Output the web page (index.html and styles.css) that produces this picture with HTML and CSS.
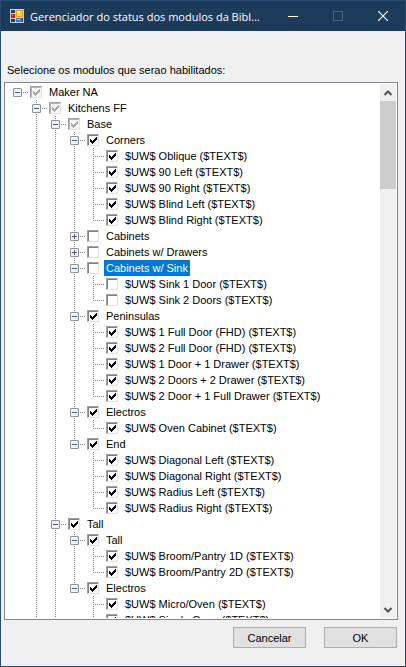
FILE: index.html
```html
<!DOCTYPE html>
<html lang="pt-BR">
<head>
  <meta charset="UTF-8">
  <title>Gerenciador do status dos modulos</title>
  <link rel="stylesheet" href="styles.css">
</head>
<body>
  <div class="window">
    <!-- Title bar -->
    <header class="titlebar">
      <svg class="app-icon" width="14" height="14" viewBox="0 0 14 14" shape-rendering="crispEdges">
        <rect width="14" height="14" fill="#c9cdd2"/>
        <rect x="1" y="1" width="4" height="3" fill="#24405c"/>
        <rect x="1" y="10" width="4" height="3" fill="#24405c"/>
        <rect x="12" y="9" width="1" height="4" fill="#24405c"/>
        <rect x="1" y="5" width="4" height="4" fill="#b3261e"/>
        <rect x="2" y="6" width="1" height="1" fill="#f0a090"/>
        <rect x="6" y="1" width="7" height="7" fill="#e0a010"/>
        <rect x="7" y="2" width="5" height="5" fill="#fbd04a"/>
        <rect x="7" y="2" width="3" height="2" fill="#fff0b0"/>
        <rect x="6" y="9" width="6" height="4" fill="#3a78d8"/>
        <rect x="7" y="10" width="3" height="1" fill="#a8ccff"/>
      </svg>
      <h1 class="title">Gerenciador do status dos modulos da Bibl...</h1>
      <div class="window-buttons">
        <button type="button" aria-label="Minimizar">
          <svg width="10" height="10" viewBox="0 0 10 10" shape-rendering="crispEdges"><path d="M0 5.5H10" stroke="#fff"/></svg>
        </button>
        <button type="button" aria-label="Maximizar" disabled>
          <svg width="10" height="10" viewBox="0 0 10 10" shape-rendering="crispEdges"><path d="M.5 .5H9.500V9.500H.5Z" fill="none" stroke="#4b647d"/></svg>
        </button>
        <button type="button" aria-label="Fechar">
          <svg width="10" height="10" viewBox="0 0 10 10"><path d="M0 0L10 10M10 0L0 10" stroke="#fff" stroke-width="1.2"/></svg>
        </button>
      </div>
    </header>

    <main class="content">
      <p class="caption">Selecione os modulos que serao habilitados:</p>

      <div class="tree-box">
        <ul class="tree">
          <li class="root">
            <div class="row"><button class="toggle minus" aria-label="Maker NA"></button><label><input type="checkbox" class="partial" checked><span>Maker NA</span></label></div>
            <ul>
              <li class="more">
                <div class="row"><button class="toggle minus" aria-label="Kitchens FF"></button><label><input type="checkbox" class="partial" checked><span>Kitchens FF</span></label></div>
                <ul>
                  <li>
                    <div class="row"><button class="toggle minus" aria-label="Base"></button><label><input type="checkbox" class="partial" checked><span>Base</span></label></div>
                    <ul>
                      <li>
                        <div class="row"><button class="toggle minus" aria-label="Corners"></button><label><input type="checkbox" checked><span>Corners</span></label></div>
                        <ul>
                          <li><div class="row leaf"><label><input type="checkbox" checked><span>$UW$ Oblique ($TEXT$)</span></label></div></li>
                          <li><div class="row leaf"><label><input type="checkbox" checked><span>$UW$ 90 Left ($TEXT$)</span></label></div></li>
                          <li><div class="row leaf"><label><input type="checkbox" checked><span>$UW$ 90 Right ($TEXT$)</span></label></div></li>
                          <li><div class="row leaf"><label><input type="checkbox" checked><span>$UW$ Blind Left ($TEXT$)</span></label></div></li>
                          <li><div class="row leaf"><label><input type="checkbox" checked><span>$UW$ Blind Right ($TEXT$)</span></label></div></li>
                        </ul>
                      </li>
                      <li>
                        <div class="row"><button class="toggle plus" aria-label="Cabinets"></button><label><input type="checkbox"><span>Cabinets</span></label></div>
                      </li>
                      <li>
                        <div class="row"><button class="toggle plus" aria-label="Cabinets w/ Drawers"></button><label><input type="checkbox"><span>Cabinets w/ Drawers</span></label></div>
                      </li>
                      <li>
                        <div class="row"><button class="toggle minus" aria-label="Cabinets w/ Sink"></button><label><input type="checkbox"><span class="selected">Cabinets w/ Sink</span></label></div>
                        <ul>
                          <li><div class="row leaf"><label><input type="checkbox"><span>$UW$ Sink 1 Door ($TEXT$)</span></label></div></li>
                          <li><div class="row leaf"><label><input type="checkbox"><span>$UW$ Sink 2 Doors ($TEXT$)</span></label></div></li>
                        </ul>
                      </li>
                      <li>
                        <div class="row"><button class="toggle minus" aria-label="Peninsulas"></button><label><input type="checkbox" checked><span>Peninsulas</span></label></div>
                        <ul>
                          <li><div class="row leaf"><label><input type="checkbox" checked><span>$UW$ 1 Full Door (FHD) ($TEXT$)</span></label></div></li>
                          <li><div class="row leaf"><label><input type="checkbox" checked><span>$UW$ 2 Full Door (FHD) ($TEXT$)</span></label></div></li>
                          <li><div class="row leaf"><label><input type="checkbox" checked><span>$UW$ 1 Door + 1 Drawer ($TEXT$)</span></label></div></li>
                          <li><div class="row leaf"><label><input type="checkbox" checked><span>$UW$ 2 Doors + 2 Drawer ($TEXT$)</span></label></div></li>
                          <li><div class="row leaf"><label><input type="checkbox" checked><span>$UW$ 2 Door + 1 Full Drawer ($TEXT$)</span></label></div></li>
                        </ul>
                      </li>
                      <li>
                        <div class="row"><button class="toggle minus" aria-label="Electros"></button><label><input type="checkbox" checked><span>Electros</span></label></div>
                        <ul>
                          <li><div class="row leaf"><label><input type="checkbox" checked><span>$UW$ Oven Cabinet ($TEXT$)</span></label></div></li>
                        </ul>
                      </li>
                      <li>
                        <div class="row"><button class="toggle minus" aria-label="End"></button><label><input type="checkbox" checked><span>End</span></label></div>
                        <ul>
                          <li><div class="row leaf"><label><input type="checkbox" checked><span>$UW$ Diagonal Left ($TEXT$)</span></label></div></li>
                          <li><div class="row leaf"><label><input type="checkbox" checked><span>$UW$ Diagonal Right ($TEXT$)</span></label></div></li>
                          <li><div class="row leaf"><label><input type="checkbox" checked><span>$UW$ Radius Left ($TEXT$)</span></label></div></li>
                          <li><div class="row leaf"><label><input type="checkbox" checked><span>$UW$ Radius Right ($TEXT$)</span></label></div></li>
                        </ul>
                      </li>
                    </ul>
                  </li>
                  <li class="more">
                    <div class="row"><button class="toggle minus" aria-label="Tall"></button><label><input type="checkbox" checked><span>Tall</span></label></div>
                    <ul>
                      <li>
                        <div class="row"><button class="toggle minus" aria-label="Tall"></button><label><input type="checkbox" checked><span>Tall</span></label></div>
                        <ul>
                          <li><div class="row leaf"><label><input type="checkbox" checked><span>$UW$ Broom/Pantry 1D ($TEXT$)</span></label></div></li>
                          <li><div class="row leaf"><label><input type="checkbox" checked><span>$UW$ Broom/Pantry 2D ($TEXT$)</span></label></div></li>
                        </ul>
                      </li>
                      <li>
                        <div class="row"><button class="toggle minus" aria-label="Electros"></button><label><input type="checkbox" checked><span>Electros</span></label></div>
                        <ul>
                          <li><div class="row leaf"><label><input type="checkbox" checked><span>$UW$ Micro/Oven ($TEXT$)</span></label></div></li>
                          <li class="more"><div class="row leaf"><label><input type="checkbox" checked><span>$UW$ Single Oven ($TEXT$)</span></label></div></li>
                        </ul>
                      </li>
                    </ul>
                  </li>
                </ul>
              </li>
            </ul>
          </li>
        </ul>

        <div class="scrollbar">
          <button type="button" aria-label="Rolar para cima">
            <svg width="8" height="6" viewBox="0 0 8 6"><path d="M.5 5L4 1.500L7.500 5" fill="none" stroke="#555" stroke-width="2"/></svg>
          </button>
          <div class="track"><div class="thumb"></div></div>
          <button type="button" aria-label="Rolar para baixo">
            <svg width="8" height="6" viewBox="0 0 8 6"><path d="M.5 1L4 4.500L7.500 1" fill="none" stroke="#555" stroke-width="2"/></svg>
          </button>
        </div>
      </div>

      <div class="actions">
        <button type="button">Cancelar</button>
        <button type="button">OK</button>
      </div>
    </main>
  </div>
</body>
</html>
```
FILE: styles.css
```css
* {
  box-sizing: border-box;
}

body {
  margin: 0;
  font-family: "Liberation Sans", Arial, sans-serif;
  font-size: 11px;
  color: #000;
}

button {
  margin: 0;
  padding: 0;
  border: none;
  background: none;
  font: inherit;
  color: inherit;
}

.window {
  display: flex;
  flex-direction: column;
  height: 100vh;
  border: 1px solid #2b4a70;
  background: #f0f0f0;
}

/* Title bar */
.titlebar {
  display: flex;
  align-items: center;
  height: 30px;
  padding-left: 9px;
  background: #1d3b5a;
  color: #fff;
}

.app-icon {
  flex: none;
}

.title {
  flex: 1;
  min-width: 0;
  margin: 0 0 0 6px;
  font-family: "Open Sans", "Noto Sans", sans-serif;
  font-size: 11px;
  font-weight: normal;
  white-space: nowrap;
}

.window-buttons {
  flex: none;
  display: flex;
}

.window-buttons button {
  display: flex;
  align-items: center;
  justify-content: center;
  width: 45px;
  height: 30px;
}

/* Dialog content */
.content {
  flex: 1;
  display: flex;
  flex-direction: column;
  min-height: 0;
  padding: 32px 7px 18px 3px;
}

.caption {
  margin: 0 0 5px 3px;
  line-height: 14px;
}

.tree-box {
  flex: 1;
  display: flex;
  min-height: 0;
  padding: 1px;
  border: 1px solid #828790;
  background: #fff;
}

/* Tree */
.tree {
  flex: 1;
  overflow: hidden;
  padding-left: 7px;
}

ul {
  margin: 0;
  padding: 0;
  list-style: none;
}

ul ul {
  padding-left: 19px;
}

/* dotted connector between siblings */
li {
  background: repeating-linear-gradient(to bottom, #808080 0 1px, transparent 1px 2px) 4px 0 / 1px 100% no-repeat;
}

li:last-child {
  background-size: 1px 9px;
}

li.more {
  background-size: 1px 100%;
}

li.root {
  background: none;
}

.row {
  display: flex;
  align-items: center;
  height: 16px;
  background: repeating-linear-gradient(to right, #808080 0 1px, transparent 1px 2px) 4px 8px / 12px 1px no-repeat;
}

.row.leaf {
  padding-left: 9px;
}

.toggle {
  flex: none;
  width: 9px;
  height: 9px;
  margin-top: 1px;
  border: 1px solid #919191;
  border-radius: 1px;
  background-color: #f4f4f4;
  background-repeat: no-repeat;
  background-position: center;
}

.minus {
  background-image: linear-gradient(#3c5aa8, #3c5aa8);
  background-size: 5px 1px;
}

.plus {
  background-image: linear-gradient(#3c5aa8, #3c5aa8), linear-gradient(#3c5aa8, #3c5aa8);
  background-size: 5px 1px, 1px 5px;
}

.row label {
  display: flex;
  align-items: center;
  margin-left: 8px;
  white-space: nowrap;
}

.row input {
  appearance: none;
  width: 12px;
  height: 12px;
  margin: 0 5px 0 0;
  border: 1px solid;
  border-color: #a0a0a0 #e3e3e3 #e3e3e3 #a0a0a0;
  box-shadow: inset 1px 1px #808080;
  background: #fff;
}

.row input:checked {
  background: #fff url("data:image/svg+xml,%3Csvg xmlns='http://www.w3.org/2000/svg' width='10' height='10' shape-rendering='crispEdges'%3E%3Cpath d='M2 4h1v1h1v1h1v-1h1v-1h1v-1h1v-1h1v3h-1v1h-1v1h-1v1h-1v1h-1v-1h-1v-1h-1z'/%3E%3C/svg%3E") no-repeat;
}

.row input.partial:checked {
  box-shadow: inset 1px 1px #b4b4b4;
  background: #f5f5f5 url("data:image/svg+xml,%3Csvg xmlns='http://www.w3.org/2000/svg' width='10' height='10' shape-rendering='crispEdges'%3E%3Cpath fill='%23aaa' d='M2 4h1v1h1v1h1v-1h1v-1h1v-1h1v-1h1v3h-1v1h-1v1h-1v1h-1v1h-1v-1h-1v-1h-1z'/%3E%3C/svg%3E") no-repeat;
}

.row span {
  padding: 0 2px;
  line-height: 16px;
}

.row .selected {
  background: #0078d7;
  color: #fff;
}

/* Scrollbar */
.scrollbar {
  flex: none;
  display: flex;
  flex-direction: column;
  width: 16px;
  background: #f0f0f0;
}

.scrollbar button {
  display: flex;
  align-items: center;
  justify-content: center;
  height: 17px;
}

.track {
  flex: 1;
}

.thumb {
  height: 88px;
  background: #cdcdcd;
}

/* Buttons */
.actions {
  display: flex;
  justify-content: flex-end;
  gap: 18px;
  margin-top: 7px;
  padding-right: 1px;
}

.actions button {
  width: 73px;
  height: 21px;
  border: 1px solid #adadad;
  background: #e1e1e1;
}
```
